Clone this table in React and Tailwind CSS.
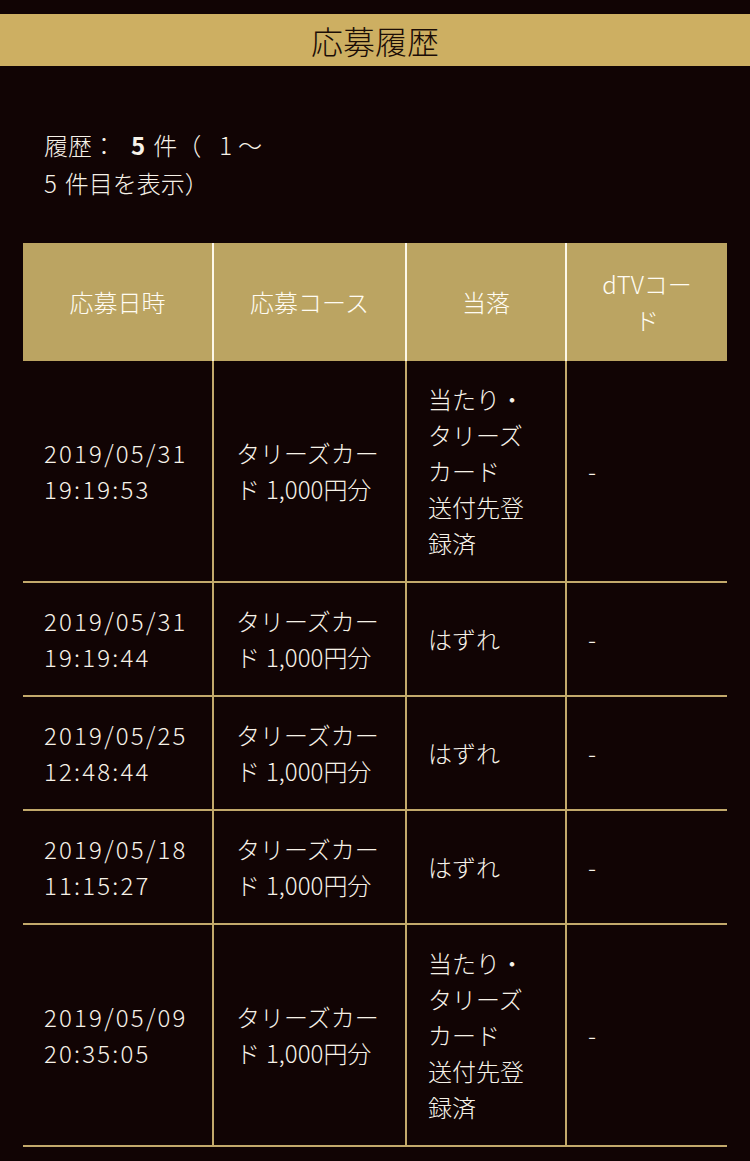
import React from "react";

const rows = [
  { date: "2019/05/31", time: "19:19:53", win: true },
  { date: "2019/05/31", time: "19:19:44", win: false },
  { date: "2019/05/25", time: "12:48:44", win: false },
  { date: "2019/05/18", time: "11:15:27", win: false },
  { date: "2019/05/09", time: "20:35:05", win: true },
];

export default function App() {
  return (
    <div className="min-h-[1161px] w-[750px] bg-[#110404] pt-[14px] font-light text-[#f7f2e8] [font-family:'Noto_Sans_CJK_JP',sans-serif]">
      <div className="flex h-[52px] items-center justify-center bg-[#cdaf62]">
        <h1 className="text-[32px] leading-none font-light text-[#1b0d06]">応募履歴</h1>
      </div>

      <div className="px-[23px]">
        <p className="mt-[60px] px-[21px] text-[24px] leading-[38px]">
          履歴：<span className="ml-[15px] mr-[8px] font-bold">5</span>件（<span className="ml-[18px] mr-[6px]">1</span>～
          <br />5<span className="ml-[8px]">件目を表示）</span>
        </p>

        <table className="mt-[41px] w-[704px] table-fixed border-collapse text-[24px] leading-[36px]">
          <colgroup>
            <col className="w-[190px]" />
            <col className="w-[193px]" />
            <col className="w-[160px]" />
            <col className="w-[161px]" />
          </colgroup>
          <thead>
            <tr className="bg-[#bba462] text-[#fffcf3]">
              <th className="px-[14px] py-[23px] text-center font-light">応募日時</th>
              <th className="border-l-2 border-[#fdf8ea] px-[14px] py-[23px] text-center font-light">応募コース</th>
              <th className="border-l-2 border-[#fdf8ea] px-[14px] py-[23px] text-center font-light">当落</th>
              <th className="border-l-2 border-[#fdf8ea] px-[30px] py-[23px] text-center font-light">dTVコード</th>
            </tr>
          </thead>
          <tbody>
            {rows.map((r, i) => (
              <tr key={i} className="border-b-2 border-[#c2a96b] align-middle">
                <td className="px-[21px] py-[20px] tracking-[2.2px]">
                  {r.date}
                  <br />
                  {r.time}
                </td>
                <td className="border-l-2 border-[#c2a96b] px-[22px] py-[20px]">
                  タリーズカード<span className="ml-[6px]">1,000</span>円分
                </td>
                <td className="border-l-2 border-[#c2a96b] px-[21px] py-[20px]">
                  {r.win ? (
                    <>
                      当たり・
                      <br />
                      タリーズ
                      <br />
                      カード
                      <br />
                      送付先登
                      <br />
                      録済
                    </>
                  ) : (
                    "はずれ"
                  )}
                </td>
                <td className="border-l-2 border-[#c2a96b] px-[21px] py-[20px]">-</td>
              </tr>
            ))}
          </tbody>
        </table>
      </div>
    </div>
  );
}
